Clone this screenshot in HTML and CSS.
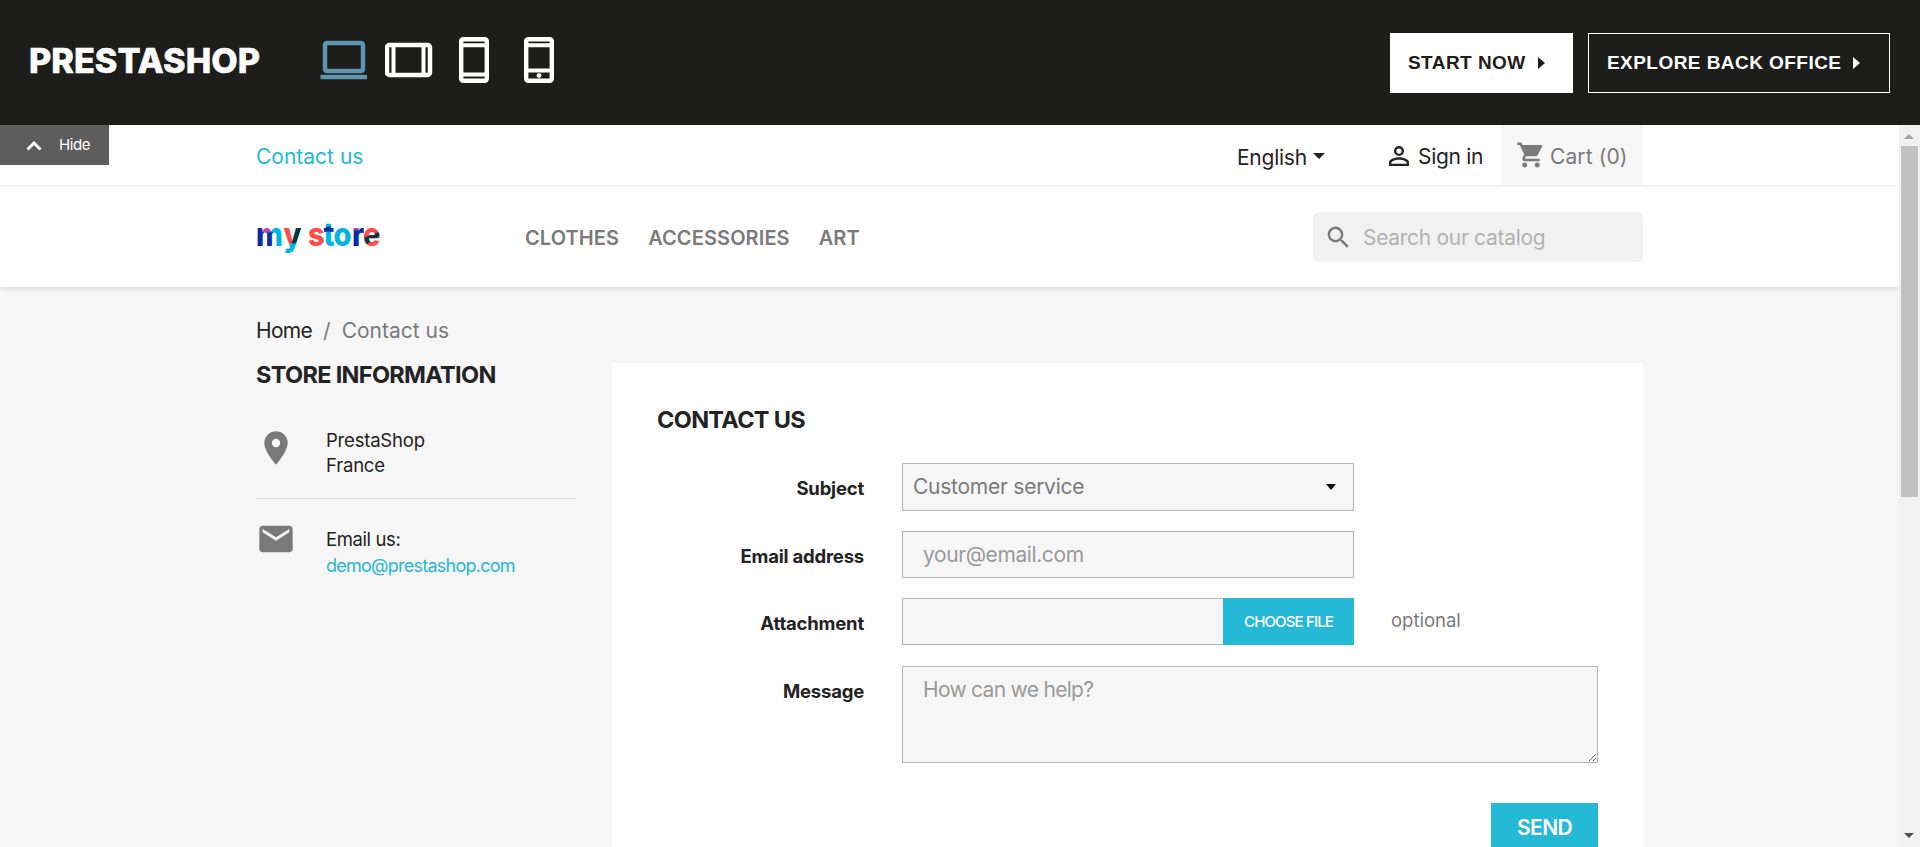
FILE: index.html
```html
<!DOCTYPE html>
<html lang="en">
<head>
<meta charset="utf-8">
<title>Contact us</title>
<link rel="stylesheet" href="styles.css">
</head>
<body>
<header class="demo-bar">
  <svg class="brand" width="232" height="40" viewBox="0 0 232 40"><text x="0" y="32" textLength="231" lengthAdjust="spacingAndGlyphs">PRESTASHOP</text></svg>
  <div class="devices">
    <svg width="48" height="48" viewBox="0 0 48 48" fill="none" stroke="#5e95b1"><rect x="5" y="7" width="38" height="28" rx="2" stroke-width="4.5"/><path d="M.5 41h46.500" stroke-width="4.500"/></svg>
    <svg width="48" height="48" viewBox="0 0 48 48" fill="none" stroke="#fff"><rect x="2" y="9" width="43" height="30" rx="2.500" stroke-width="4.500"/><path d="M8.500 9v30M38.500 9v30" stroke-width="4"/></svg>
    <svg width="31" height="48" viewBox="0 0 31 48" fill="none" stroke="#fff"><rect x="2.200" y="3.200" width="25.600" height="41.600" rx="2" stroke-width="4.400"/><path d="M2 9.200h26M2 38.500h26" stroke-width="4"/></svg>
    <svg class="phone" width="31" height="48" viewBox="0 0 31 48" fill="none" stroke="#fff"><rect x="2.200" y="3.200" width="25.600" height="41.600" rx="2" stroke-width="4.400"/><path d="M2 9.200h26M2 34.500h26" stroke-width="4"/><circle cx="15" cy="39.600" r="2.400" fill="#fff" stroke="none"/></svg>
  </div>
  <div class="demo-actions">
    <a class="demo-btn demo-btn-light">START NOW<i class="caret-right"></i></a>
    <a class="demo-btn">EXPLORE BACK OFFICE<i class="caret-right"></i></a>
  </div>
</header>
<a class="hide-tab"><svg width="16" height="11" viewBox="0 0 16 11"><path d="M1.500 9.500 8 3l6.500 6.500" fill="none" stroke="#fff" stroke-width="3"/></svg>Hide</a>
<div class="frame">
  <div class="page">
    <nav class="top-nav">
      <div class="container top-row">
        <a class="link">Contact us</a>
        <div class="tools">
          <span class="language">English<i class="caret-down"></i></span>
          <span class="sign-in"><svg width="30" height="30" viewBox="0 0 24 24" fill="#232323"><path d="M12 5.900a2.100 2.100 0 1 1 0 4.200 2.100 2.100 0 0 1 0-4.200m0 9c2.970 0 6.100 1.460 6.100 2.100v1.100H5.900V17c0-.64 3.130-2.100 6.100-2.100M12 4a4 4 0 1 0 0 8 4 4 0 0 0 0-8m0 9c-2.670 0-8 1.340-8 4v3h16v-3c0-2.660-5.330-4-8-4"/></svg>Sign in</span>
          <span class="cart"><svg width="30" height="30" viewBox="0 0 24 24" fill="#7a7a7a"><path d="M7 18c-1.100 0-1.990.9-1.990 2S5.900 22 7 22s2-.9 2-2-.9-2-2-2M1 2v2h2l3.600 7.590-1.350 2.450c-.16.28-.25.61-.25.96 0 1.100.9 2 2 2h12v-2H7.420c-.14 0-.25-.11-.25-.25l.03-.12.900-1.630h7.450c.75 0 1.410-.41 1.750-1.030l3.580-6.490A1 1 0 0 0 20 4H5.210l-.94-2zm16 16c-1.100 0-1.990.9-1.990 2s.89 2 1.990 2 2-.9 2-2-.9-2-2-2"/></svg>Cart (0)</span>
        </div>
      </div>
    </nav>
    <div class="main-nav">
      <div class="container nav-row">
        <svg class="store-logo" width="126" height="44" viewBox="0 0 126 44">
          <defs>
            <pattern id="tints" width="126" height="44" patternUnits="userSpaceOnUse">
              <rect width="126" height="44" fill="#00b5e2"/>
              <rect x="1" y="12" width="7" height="22" fill="#0a2d9c"/><rect x="6" y="12" width="8" height="7" fill="#d63fae"/><rect x="11" y="19" width="6" height="15" fill="#0a2d9c"/>
              <rect x="27" y="12" width="9" height="17" fill="#ff4b45"/><rect x="36" y="12" width="9" height="17" fill="#07353d"/>
              <rect x="51" y="10" width="16" height="24" fill="#ff4b45"/>
              <rect x="68" y="14" width="9" height="4.500" fill="#0a2d9c"/>
              <rect x="97" y="12" width="12" height="24" fill="#0a2d9c"/><rect x="97" y="12" width="5" height="5" fill="#d63fae"/>
              <rect x="108" y="10" width="18" height="24" fill="#ff4b45"/><path d="m108 24 17-6v4l-15 8z" fill="#07353d"/>
            </pattern>
          </defs>
          <text y="31" fill="url(#tints)" x="0 27.500 52 67.500 77.500 96 107" transform="translate(0 -3.100) scale(1 1.120)">mystore</text>
        </svg>
        <div class="menu"><a>CLOTHES</a><a>ACCESSORIES</a><a>ART</a></div>
        <div class="search"><svg width="29" height="29" viewBox="0 0 24 24" fill="#7a7a7a"><path d="M15.500 14h-.79l-.28-.27A6.500 6.500 0 1 0 13.730 14.430l.27.28v.79l5 4.990L20.490 19zm-6 0a4.500 4.500 0 1 1 0-9 4.500 4.500 0 0 1 0 9"/></svg><span>Search our catalog</span></div>
      </div>
    </div>
    <main class="container">
      <div class="breadcrumb"><a>Home</a><i>/</i><span>Contact us</span></div>
      <div class="columns">
        <aside class="store-info">
          <h2>STORE INFORMATION</h2>
          <div class="info-row address"><svg width="40" height="40" viewBox="0 0 24 24" fill="#7a7a7a"><path d="M12 2a7 7 0 0 0-7 7c0 5.250 7 13 7 13s7-7.750 7-13a7 7 0 0 0-7-7m0 9.500a2.500 2.500 0 1 1 0-5 2.500 2.500 0 0 1 0 5"/></svg><p>PrestaShop<br>France</p></div>
          <hr>
          <div class="info-row email"><svg width="40" height="40" viewBox="0 0 24 24" fill="#7a7a7a"><path d="M20 4H4c-1.100 0-1.990.9-1.990 2L2 18c0 1.100.9 2 2 2h16c1.100 0 2-.9 2-2V6c0-1.100-.9-2-2-2m0 4-8 5-8-5V6l8 5 8-5z"/></svg><p>Email us:<br><a class="link">demo@prestashop.com</a></p></div>
        </aside>
        <section class="card">
          <h1>CONTACT US</h1>
          <div class="field subject"><label>Subject</label><div class="control select"><span>Customer service</span><i class="caret-small"></i></div></div>
          <div class="field mail"><label>Email address</label><input class="control" placeholder="your@email.com"></div>
          <div class="field file"><label>Attachment</label><div class="control upload"><span>CHOOSE FILE</span></div><em>optional</em></div>
          <div class="field message"><label>Message</label><textarea class="control" placeholder="How can we help?"></textarea></div>
          <div class="submit"><a>SEND</a></div>
        </section>
      </div>
    </main>
  </div>
  <div class="scrollbar"><i class="arrow-up"></i><div class="thumb"></div><i class="arrow-down"></i></div>
</div>
</body>
</html>
```
FILE: styles.css
```css
* { box-sizing: border-box; }
body { margin: 0; height: 847px; overflow: hidden; position: relative; background: #f6f6f6; color: #232323; font: 21px/24px Inter, sans-serif; }
svg { display: block; flex: none; }
i, em { font-style: normal; }

.demo-bar { height: 125px; background: #1d1d1b; display: flex; align-items: flex-start; padding: 0 30px 0 29px; }
.brand { margin-top: 41px; font: 800 34px Inter, sans-serif; fill: #fff; stroke: #fff; stroke-width: .5px; }
.devices { display: flex; padding: 36px 0 0 59px; }
.devices svg + svg { margin-left: 17px; }
.devices svg:nth-child(3) { margin-left: 26px; }
.devices .phone { margin-left: 34px; }
.demo-actions { margin: 33px 0 0 auto; display: flex; gap: 15px; }
.demo-btn { width: 302px; height: 60px; padding-left: 18px; border: 1px solid #fff; color: #fff; font: bold 19px/58px "Liberation Sans", sans-serif; letter-spacing: .45px; display: flex; align-items: center; }
.demo-btn-light { width: 183px; background: #fff; color: #1d1d1b; padding-left: 17px; }
.caret-right { margin-left: 12px; border: solid transparent; border-width: 6px 0 6px 7px; border-left-color: currentColor; }

.hide-tab { position: absolute; left: 0; top: 125px; z-index: 2; width: 109px; height: 40px; background: #5d5d5d; color: #fff; font-size: 15px; line-height: 40px; letter-spacing: -.4px; display: flex; align-items: center; padding-left: 26px; gap: 17px; }

.frame { display: flex; height: 722px; }
.page { width: 1899px; }
.container { width: 1387px; margin-left: 256px; }
.top-nav { height: 62px; background: #fff; border-bottom: 2px solid #f6f6f6; }
.top-row { display: flex; justify-content: space-between; height: 60px; line-height: 64px; }
.link { color: #24b9d7; }
.tools { display: flex; }
.language { display: flex; width: 147px; letter-spacing: -.25px; line-height: 66px; }
.caret-down { margin: 28px 0 0 6px; height: 6px; border: solid transparent; border-width: 6px 6px 0; border-top-color: #232323; }
.sign-in { display: flex; width: 117px; gap: 4px; letter-spacing: -.3px; }
.sign-in svg { width: 30px; margin-top: 16px; }
.cart { width: 142px; height: 60px; padding-left: 15px; gap: 4px; background: #f6f6f6; color: #7a7a7a; letter-spacing: .1px; display: flex; }
.cart svg { margin-top: 15px; }
.main-nav { height: 100px; background: #fff; box-shadow: 0 2px 5px rgba(0, 0, 0, .11); }
.nav-row { display: flex; padding-top: 25px; height: 100px; }
.store-logo { margin-top: 2px; font: 800 29px Inter, sans-serif; }
.menu { display: flex; gap: 29px; margin-left: 143px; font-size: 20px; line-height: 53px; font-weight: 600; letter-spacing: .1px; color: #7a7a7a; }
.search { width: 330px; height: 50px; margin-left: auto; border-radius: 6px; background: #f1f1f1; color: #b1b1b1; letter-spacing: -.3px; line-height: 26px; display: flex; align-items: center; padding-left: 11px; gap: 10px; }
.search span { padding-top: 1px; }

.breadcrumb { height: 76px; padding-top: 32px; display: flex; gap: 11px; }
.breadcrumb a { letter-spacing: -.7px; }
.breadcrumb i, .breadcrumb span { color: #7a7a7a; }
.columns { display: flex; align-items: flex-start; }
.store-info { width: 319px; margin-right: 37px; }
h2, h1 { margin: 0; font-size: 23.5px; font-weight: 700; line-height: 24px; letter-spacing: -.68px; }
.store-info p { margin: 0; font-size: 18.5px; line-height: 26px; letter-spacing: -.2px; }
.store-info .link { font-size: 18px; letter-spacing: -.75px; }
.info-row { display: flex; gap: 30px; }
.address { padding-top: 41px; height: 111px; }
.address p { line-height: 25px; }
.store-info hr { margin: 0; border: 0; height: 1px; background: #dcdcdc; }
.email { padding-top: 20px; }
.email p { padding-top: 7px; letter-spacing: -.4px; }

.card { width: 1031px; height: 484px; background: #fff; padding: 45px 45px 0; }
.field { display: flex; }
.field label { width: 207px; margin-right: 38px; text-align: right; font-size: 18.5px; font-weight: 700; line-height: 50px; letter-spacing: -.2px; }
.control { width: 452px; height: 47px; border: 1px solid #b5b5b5; border-radius: 0; background: #f6f6f6; color: #7a7a7a; font: 21px/24px Inter, sans-serif; letter-spacing: -.4px; margin: 0; padding: 0 20px; outline: 0; }
.control::placeholder { color: #999; opacity: 1; }
.subject { margin-top: 31px; height: 68px; }
.select { height: 48px; padding: 0 17px 0 10px; letter-spacing: -.25px; display: flex; align-items: center; justify-content: space-between; }
.caret-small { border: solid transparent; border-width: 6px 5.5px 0; border-top-color: #111; }
.mail { height: 67px; }
.file { height: 68px; }
.upload { padding: 0; display: flex; justify-content: flex-end; }
.upload span { width: 131px; height: 47px; margin: -1px -1px 0 0; background: #24b9d7; color: #fff; font-size: 15px; font-weight: 500; line-height: 48px; text-align: center; letter-spacing: -.85px; }
.file em { margin-left: 37px; font-size: 18.5px; line-height: 45px; color: #7a7a7a; }
.message { height: 137px; }
textarea.control { width: 696px; height: 97px; padding-top: 11px; resize: both; letter-spacing: -.7px; }
.submit { display: flex; justify-content: flex-end; }
.submit a { width: 107px; height: 48px; background: #24b9d7; color: #fff; font-weight: 600; letter-spacing: -.6px; text-align: center; line-height: 49px; }

.scrollbar { width: 21px; background: #f1f1f1; display: flex; flex-direction: column; align-items: center; padding: 9px 1px 9px 0; }
.arrow-up { border: solid transparent; border-width: 0 5px 5px; border-bottom-color: #a3a3a3; }
.thumb { width: 17px; height: 351px; margin-top: 7px; background: #c1c1c1; }
.arrow-down { margin-top: auto; border: solid transparent; border-width: 5px 5px 0; border-top-color: #505050; }
```
